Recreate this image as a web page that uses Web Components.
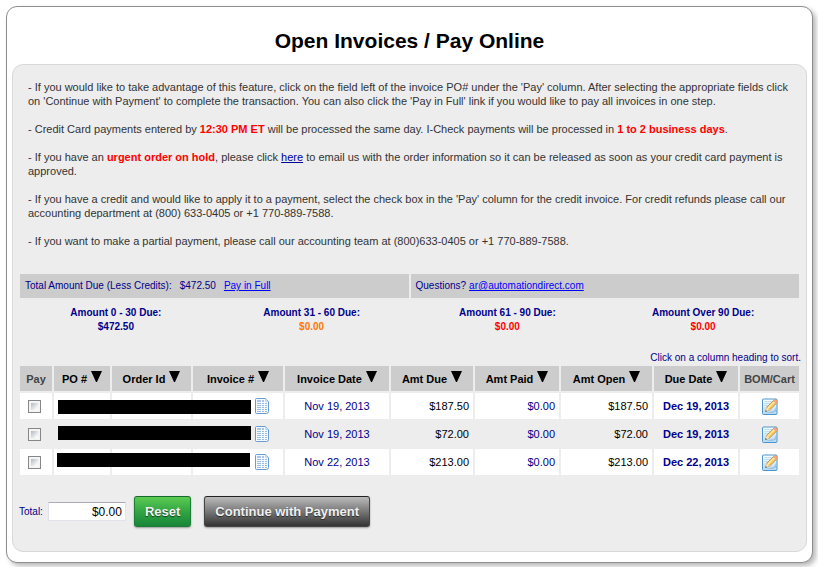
<!DOCTYPE html>
<html lang="en">
<head>
<meta charset="utf-8">
<title>Open Invoices / Pay Online</title>
<style>
  body { margin: 0; padding: 6px 5px 4px 6px; background: #fff; font-family: "Liberation Sans", Arial, sans-serif; font-size: 11px; line-height: 14px; color: #333; }
  a { color: #00009c; }
  strong { color: #f00; }
  p { margin: 0; }
</style>
</head>
<body>
<page-card>
  <span slot="title">Open Invoices / Pay Online</span>
  <payment-notes>
    <p>- If you would like to take advantage of this feature, click on the field left of the invoice PO# under the 'Pay' column. After selecting the appropriate fields click on 'Continue with Payment' to complete the transaction. You can also click the 'Pay in Full' link if you would like to pay all invoices in one step.</p>
    <p>- Credit Card payments entered by <strong>12:30 PM ET</strong> will be processed the same day. I-Check payments will be processed in <strong>1 to 2 business days</strong>.</p>
    <p>- If you have an <strong>urgent order on hold</strong>, please click <a href="#email">here</a> to email us with the order information so it can be released as soon as your credit card payment is approved.</p>
    <p>- If you have a credit and would like to apply it to a payment, select the check box in the 'Pay' column for the credit invoice. For credit refunds please call our accounting department at (800) 633-0405 or +1 770-889-7588.</p>
    <p>- If you want to make a partial payment, please call our accounting team at (800)633-0405 or +1 770-889-7588.</p>
  </payment-notes>
  <account-summary total="$472.50" email="ar@automationdirect.com">
    <amount-due label="Amount 0 - 30 Due:">$472.50</amount-due>
    <amount-due label="Amount 31 - 60 Due:" style="--amount:#ff7800">$0.00</amount-due>
    <amount-due label="Amount 61 - 90 Due:" style="--amount:#f00">$0.00</amount-due>
    <amount-due label="Amount Over 90 Due:" style="--amount:#f00">$0.00</amount-due>
  </account-summary>
  <invoice-table></invoice-table>
  <payment-bar></payment-bar>
</page-card>

<script>
const define = (name, html, setup) => customElements.define(name, class extends HTMLElement {
  constructor() {
    super();
    this.attachShadow({ mode: 'open' }).innerHTML = html;
  }
  connectedCallback() { if (setup) setup(this, this.shadowRoot); }
});

define('page-card', `
<style>
  :host { display: block; box-sizing: border-box; padding: 0 5px 10px; border: 1px solid #8e8e8e; border-radius: 11px; background: #fff; box-shadow: 3px 3px 5px rgba(0,0,0,.28); }
  h1 { margin: 0; padding: 21px 0 11px; font-size: 21px; line-height: 25px; text-align: center; color: #000; }
  section { border: 1px solid #d8d8d8; border-radius: 11px; background: #ededed; padding: 15px 5px 24px; }
</style>
<h1><slot name="title"></slot></h1>
<section><slot></slot></section>`);

define('payment-notes', `
<style>:host { display: flex; flex-direction: column; gap: 14px; padding: 0 0 26px 10px; }</style>
<slot></slot>`);

define('amount-due', `
<style>
  :host { display: block; text-align: center; font-weight: bold; color: #00008b; }
  b { display: block; color: var(--amount, #00008b); }
</style>
<span></span><b><slot></slot></b>`, (el, root) => {
  root.querySelector('span').textContent = el.getAttribute('label');
});

define('account-summary', `
<style>
  :host { display: block; color: #00008b; font-size: 10px; }
  .bar { display: grid; grid-template-columns: 1fr 1fr; gap: 2px; padding: 0 2px; line-height: 24px; }
  .bar div { display: flex; background: #ccc; padding: 0 5px; }
  .total { gap: 8px; }
  .questions { gap: 3px; }
  a { color: #00f; }
  .amounts { display: grid; grid-template-columns: repeat(4, 1fr); padding: 8px 0 17px; }
</style>
<div class="bar">
  <div class="total"><span>Total Amount Due (Less Credits):</span><span id="total"></span><a href="#pay-in-full">Pay in Full</a></div>
  <div class="questions"><span>Questions?</span><a id="mail"></a></div>
</div>
<div class="amounts"><slot></slot></div>`, (el, root) => {
  root.getElementById('total').textContent = el.getAttribute('total');
  const mail = root.getElementById('mail');
  mail.textContent = el.getAttribute('email');
  mail.href = 'mailto:' + el.getAttribute('email');
});

define('document-icon', `
<style>:host { display: block; width: 14px; height: 16px; } svg { display: block; }</style>
<svg width="14" height="16" viewBox="0 0 14 16">
  <path d="M1.5.5h9l3 3v10q0 2-2 2h-10q-1 0-1-1v-13q0-1 1-1z" fill="#f4f9fe" stroke="#699bd3"/>
  <path d="M10.5.5v3h3z" fill="#c6dcf3" stroke="#9cbfe6" stroke-width=".5"/>
  <path d="M2 2h4v2h-4zM7 2h2v2h-2z" fill="#a8c5e8"/>
  <path d="M2 5.500h4M7 5.500h2M10 5.500h2M2 7.500h4M7 7.500h2M10 7.500h2M2 9.500h4M7 9.500h2M10 9.500h2M2 11.500h4M7 11.500h2M10 11.500h2M2 13.500h4M7 13.500h2M10 13.500h2" stroke="#9bbce3"/>
</svg>`);

define('edit-icon', `
<style>:host { display: block; width: 16px; height: 17px; } svg { display: block; }</style>
<svg width="16" height="17" viewBox="0 0 16 17">
  <defs><linearGradient id="p" x2="0" y2="1"><stop stop-color="#fafdff"/><stop offset="1" stop-color="#b4d9f5"/></linearGradient></defs>
  <rect x=".5" y="1" width="14.500" height="15.500" rx="1" fill="url(#p)" stroke="#4d94cf"/>
  <path d="M2.500 3.500h8M2.500 5.500h6M2.500 7.500h4M2.500 14.500h10" stroke="#bbdcf1"/>
  <path d="M4 14.500l8-1.500 2-4v4.500l-4 1.500z" fill="#8db4d0" opacity=".7"/>
  <path d="M3.500 13.500l1.300-4.300 7.200-7.100q1.200-1 2.600.2 1.400 1.300.3 2.600l-7.400 7.200z" fill="#f6c65e" stroke="#b98a3a" stroke-width=".8"/>
  <path d="M5.500 9.500l6.700-6.600 1.100.9-6.800 6.800z" fill="#ffe9a5"/>
  <path d="M11.300 2.900l.9-.8q1.200-.9 2.400.2 1.300 1.300.3 2.600l-.8.700z" fill="#eba98c"/>
  <path d="M4.800 9.500l2.600 2.500-3.900 1.500z" fill="#f8e6c9"/>
  <path d="M3.900 12.200l1.100 1-1.700.6z" fill="#333"/>
</svg>`);

define('invoice-table', `
<style>
  :host { display: block; font-size: 11px; color: #00008b; }
  .hint { margin: 0; text-align: right; font-size: 10px; line-height: 13px; }
  table { width: 100%; table-layout: fixed; border-collapse: separate; border-spacing: 2px; }
  th, td { box-sizing: border-box; padding: 0; overflow: visible; }
  th { height: 25px; background: #ccc; color: #444; white-space: nowrap; }
  td { height: 26px; text-align: center; }
  tr.odd td { background: #fff; }
  th button { all: unset; display: flex; align-items: center; justify-content: center; gap: 4px; width: 100%; color: #000; cursor: pointer; }
  th button:focus-visible { outline: 1px dotted #000; }
  th svg { display: block; width: 11px; height: 11px; padding-bottom: 4px; }
  input { display: block; box-sizing: border-box; appearance: none; width: 13px; height: 13px; margin: 0 8px; border: 1px solid #858686; background: linear-gradient(135deg, #b3b8c0, #fafafa 85%) 2px 2px / 7px 7px no-repeat, #f4f4f4; }
  input:checked { background: #335; box-shadow: inset 0 0 0 2px #f4f4f4; }
  .money { text-align: right; padding-right: 4px; }
  .black { color: #000; }
  .due { font-weight: bold; }
  .po { position: relative; }
  .redacted { position: absolute; left: 4px; top: 7px; width: 193px; height: 14px; background: #000; }
  .last .redacted { left: 3px; top: 4px; }
  .middle .redacted { top: 5px; }
  td a { display: block; }
  document-icon { margin: 0 14px 0 auto; }
  edit-icon { margin: 0 auto; }
</style>
<p class="hint">Click on a column heading to sort.</p>
<table>
  <colgroup><col style="width:32px"><col style="width:56px"><col style="width:79px"><col style="width:90px"><col style="width:104px"><col style="width:82px"><col style="width:84px"><col style="width:91px"><col style="width:84px"><col style="width:59px"></colgroup>
  <thead><tr id="head"></tr></thead>
  <tbody id="body"></tbody>
</table>`, (el, root) => {
  const arrow = '<svg viewBox="0 0 11 11" aria-hidden="true"><path d="M0 0h11L6 11H5z"/></svg>';
  const sortable = ['PO #', 'Order Id', 'Invoice #', 'Invoice Date', 'Amt Due', 'Amt Paid', 'Amt Open', 'Due Date'];
  root.getElementById('head').innerHTML = '<th scope="col">Pay</th>' +
    sortable.map(t => `<th scope="col"><button type="button">${t}${arrow}</button></th>`).join('') +
    '<th scope="col">BOM/Cart</th>';
  const rows = [
    ['odd', 'Nov 19, 2013', '$187.50', 'Dec 19, 2013'],
    ['middle', 'Nov 19, 2013', '$72.00', 'Dec 19, 2013'],
    ['odd last', 'Nov 22, 2013', '$213.00', 'Dec 22, 2013'],
  ];
  root.getElementById('body').innerHTML = rows.map(([cls, date, amount, due], i) => `
    <tr class="${cls}">
      <td><input type="checkbox" aria-label="Pay invoice ${i + 1}"></td>
      <td class="po"><div class="redacted"></div></td><td></td>
      <td><a href="#invoice-${i + 1}" aria-label="View invoice"><document-icon></document-icon></a></td>
      <td>${date}</td>
      <td class="money black">${amount}</td>
      <td class="money">$0.00</td>
      <td class="money black">${amount}</td>
      <td class="due">${due}</td>
      <td><a href="#bom-${i + 1}" aria-label="Edit BOM or cart"><edit-icon></edit-icon></a></td>
    </tr>`).join('');
});

define('payment-bar', `
<style>
  :host { display: flex; align-items: center; padding: 19px 0 0 1px; color: #00008b; font-size: 10px; }
  label { margin-right: 5px; }
  input { box-sizing: border-box; width: 78px; height: 19px; margin: 0 8px 0 0; padding: 0 3px; border: 1px solid #e2e3ea; border-top-color: #abadb3; border-radius: 1px; background: #fff; color: #000; font: 12px "Liberation Sans", Arial, sans-serif; text-align: right; }
  button { box-sizing: border-box; height: 31px; margin: 0; padding: 0 10px; border: 1px solid #444; border-top-color: #222; border-radius: 3px; background: linear-gradient(#bbb, #777 50%, #333); color: #f0f0f0; font: bold 13px "Liberation Sans", Arial, sans-serif; text-shadow: 0 1px 1px rgba(0,0,0,.6); box-shadow: 0 1px 2px rgba(0,0,0,.35); cursor: pointer; }
  .reset { margin-right: 13px; border-color: #1d7d38; border-top-color: #14692c; background: linear-gradient(#5bcb50, #32a545 50%, #188638); }
</style>
<label for="total">Total:</label>
<input id="total" type="text" value="$0.00">
<button class="reset" type="button">Reset</button>
<button type="button">Continue with Payment</button>`);
</script>
</body>
</html>
